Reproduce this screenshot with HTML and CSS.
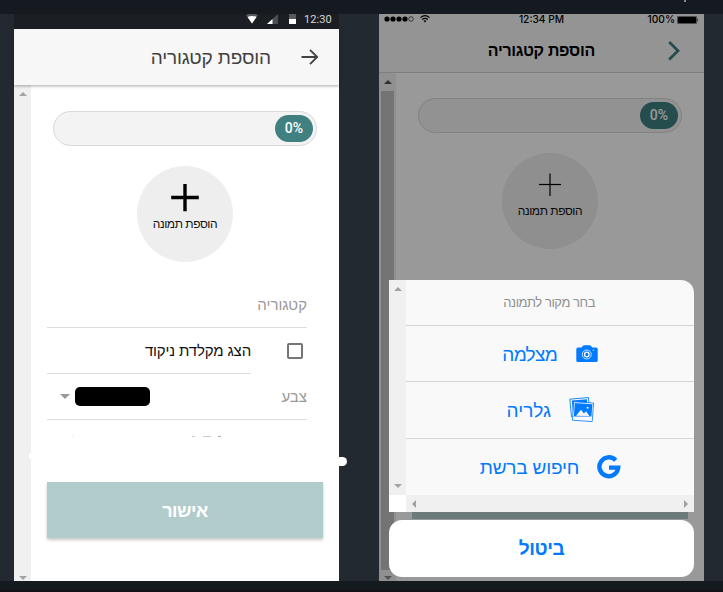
FILE: index.html
```html
<!DOCTYPE html>
<html lang="he">
<head>
<meta charset="utf-8">
<title>הוספת קטגוריה</title>
<link rel="stylesheet" href="styles.css">
</head>
<body>
<div class="topbar"><span class="topbar-mark"></span></div>
<main class="stage">
  <section class="phone android">
    <div class="status">
      <svg class="st-wifi" width="12" height="10" viewBox="0 0 12 10"><path d="M0 1Q6-2 12 1L6 9.5Z" fill="#565a5e"/><path d="M1.5 3Q6 .8 10.5 3L6 9.5Z" fill="#fff"/></svg>
      <svg class="st-signal" width="11" height="10" viewBox="0 0 11 10"><path d="M11 0V10H0Z" fill="#4c4f54"/><path d="M5.5 5V10H0Z" fill="#fff"/></svg>
      <svg class="st-batt" width="7" height="10" viewBox="0 0 7 10"><path d="M0 0H7V10H0Z" fill="#565a5e"/><path d="M0 5H7V10H0Z" fill="#fff"/></svg>
      <span>12:30</span>
    </div>
    <header class="header">
      <h1 dir="rtl">הוספת קטגוריה</h1>
      <svg width="18" height="16" viewBox="0 0 18 16"><path d="M.5 8H16.2M9 .8L16.2 8L9 15.2" fill="none" stroke="#424242" stroke-width="1.8"/></svg>
    </header>
    <div class="view">
      <div class="scroll"><i class="up"></i><i class="down"></i></div>
      <div class="content">
        <div class="progress"><span>0%</span></div>
        <div class="photo">
          <svg width="28" height="28" viewBox="0 0 28 28"><path d="M14 0V27.3M.2 13.5H27.8" stroke="#000" stroke-width="3.4"/></svg>
          <span dir="rtl">הוספת תמונה</span>
        </div>
        <div class="form">
          <div class="row row-cat"><label dir="rtl">קטגוריה</label></div>
          <div class="check-row">
            <div class="row row-check"><label dir="rtl">הצג מקלדת ניקוד</label></div>
            <span class="checkbox"></span>
          </div>
          <div class="row row-color"><i class="caret"></i><span class="swatch"></span><label dir="rtl">צבע</label></div>
        </div>
        <div class="traces"><i class="t0"></i><i class="t1"></i><i class="t2"></i><i class="t3"></i></div>
        <button class="confirm" dir="rtl">אישור</button>
      </div>
    </div>
    <i class="brush-left"></i><i class="brush-right"></i>
  </section>

  <section class="phone ios">
    <div class="status">
      <div class="carrier">
        <svg width="31" height="6" viewBox="0 0 31 6"><g><circle cx="3" cy="3" r="2.6"/><circle cx="9" cy="3" r="2.6"/><circle cx="15" cy="3" r="2.6"/><circle cx="21" cy="3" r="2.6"/><circle cx="27" cy="3" r="2.3" fill="none" stroke="#000" stroke-width=".6"/></g></svg>
        <svg width="10" height="8" viewBox="0 0 10 8"><path d="M.5 2.6Q5-1.2 9.5 2.6M2.2 4.5Q5 2.2 7.8 4.5" fill="none" stroke="#000" stroke-width="1.2"/><path d="M3.5 5.8Q5 4.6 6.5 5.8L5 7.6Z"/></svg>
      </div>
      <span class="clock">12:34 PM</span>
      <div class="power"><span>100%</span>
        <svg width="22" height="8" viewBox="0 0 22 8"><rect x=".3" y=".3" width="19.4" height="7.4" rx="1.2" fill="none" stroke="#000" stroke-width=".6"/><rect x="1" y="1" width="18" height="6" rx=".6"/><path d="M20.5 2.5Q22 4 20.5 5.5Z"/></svg>
      </div>
    </div>
    <header class="header">
      <h1 dir="rtl">הוספת קטגוריה</h1>
      <svg width="12" height="20" viewBox="0 0 12 20"><path d="M1.2 1L10 9.7L1.2 18.5" fill="none" stroke="#408080" stroke-width="2.8"/></svg>
    </header>
    <div class="view">
      <div class="scroll"><i class="up"></i><b class="thumb"></b><i class="down"></i></div>
      <div class="content">
        <div class="progress"><span>0%</span></div>
        <div class="photo">
          <svg width="22" height="24" viewBox="0 0 22 24"><path d="M11 .5V23" stroke="#000" stroke-opacity=".6" stroke-width="2"/><path d="M0 11.5H22" stroke="#000" stroke-width="1.2"/></svg>
          <span dir="rtl">הוספת תמונה</span>
        </div>
        <div class="confirm"></div>
      </div>
    </div>
    <div class="backdrop">
      <div class="sheet">
        <div class="sheet-scroll"><i class="up"></i><i class="down"></i></div>
        <div class="options">
          <div class="option caption"><span dir="rtl">בחר מקור לתמונה</span></div>
          <div class="option camera"><span dir="rtl">מצלמה</span>
            <svg width="22" height="18" viewBox="0 0 22 18"><path d="M2 2.5H5.5L7 .8Q7.4.3 8.2.3H13.6Q14.4.3 14.8.8L16.3 2.5H20Q21.7 2.5 21.7 4.2V15.4Q21.7 17 20 17H2Q.3 17 .3 15.4V4.2Q.3 2.5 2 2.5Z" fill="#007aff"/><circle cx="10.8" cy="9.5" r="4.5" fill="none" stroke="#f9f9f9" stroke-width=".8"/><circle cx="10.8" cy="9.5" r="2.3" fill="none" stroke="#f9f9f9" stroke-width="1.3"/><circle cx="17.3" cy="5.2" r=".6" fill="#f9f9f9"/></svg>
          </div>
          <div class="option gallery"><span dir="rtl">גלריה</span>
            <svg width="26" height="26" viewBox="0 0 26 26"><path d="M.8 2.2L19.4.5L20 6L3.5 20L2.5 19.8Z" fill="#f9f9f9" stroke="#007aff" stroke-width=".9"/><path d="M2.8 3.6L18 2.2V6H6L5 17L4 16.9Z" fill="#007aff"/><path d="M4.8 4.7L24.6 6L23.2 24.6L3.4 23.2Z" fill="#f9f9f9" stroke="#007aff" stroke-width=".8"/><path d="M5.8 6L23.4 7.2L22.4 19.5H4.8Z" fill="#007aff"/><path d="M7 18.7L12 12.8L14.8 16.4L17 14.2L20.4 19Z" fill="#f9f9f9"/><circle cx="18.6" cy="10.7" r="1" fill="#f9f9f9"/></svg>
          </div>
          <div class="option google"><span dir="rtl">חיפוש ברשת</span>
            <svg width="24" height="24" viewBox="0 0 24 24"><path d="M18.7 5.3A9.4 9.4 0 1 0 21.2 12.6H12" fill="none" stroke="#007aff" stroke-width="4.4"/></svg>
          </div>
        </div>
        <div class="corner"></div>
        <div class="sheet-hscroll"><i class="left"></i><i class="right"></i></div>
      </div>
      <button class="cancel" dir="rtl">ביטול</button>
    </div>
  </section>
</main>
<div class="bottombar"></div>
</body>
</html>
```

FILE: styles.css
```css
* { box-sizing: border-box; }
body {
  margin: 0; width: 723px; height: 592px; overflow: hidden;
  display: flex; flex-direction: column;
  background: #232930;
  font-family: "Liberation Sans", Arial, sans-serif;
}
h1, button { margin: 0; font: inherit; border: 0; padding: 0; }
svg { display: block; flex: none; }
i { display: block; flex: none; }
.topbar { height: 14px; background: #151920; display: flex; justify-content: flex-end; padding-right: 37px; flex: none; }
.topbar-mark { width: 2px; height: 2px; background: #85888c; }
.bottombar { height: 11px; background: #151920; border-bottom: 2px solid #111318; }
.stage { height: 567px; display: flex; gap: 40px; padding-left: 14px; flex: none; }
.phone { width: 325px; height: 567px; display: flex; flex-direction: column; position: relative; flex: none; }

/* shared pieces */
.view { display: flex; flex: 1; min-height: 0; }
.scroll { width: 17px; background: #f0f0f0; display: flex; flex-direction: column; justify-content: space-between; align-items: center; flex: none; }
.content { flex: 1; background: #fff; display: flex; flex-direction: column; padding: 0 16px; min-width: 0; }
.up { border: 4px solid transparent; border-top: 0; border-bottom: 4px solid #a3a3a3; }
.down { border: 4px solid transparent; border-bottom: 0; border-top: 4px solid #a3a3a3; }
.progress { height: 35px; margin: 26px 6px 0; flex: none; border: 1px solid #d9d9d9; border-radius: 18px; background: #f3f3f3; display: flex; justify-content: flex-end; align-items: center; padding-right: 3px; }
.progress span { width: 38px; height: 27px; border-radius: 14px; background: #408080; color: #fff; font: 500 14px/27px Roboto, sans-serif; text-align: center; }
.photo { width: 96px; height: 96px; flex: none; border-radius: 50%; background: #eee; margin: 20px auto 0; display: flex; flex-direction: column; align-items: center; padding-top: 18px; }
.photo span { font-size: 12px; letter-spacing: -.45px; line-height: 16px; white-space: nowrap; margin-top: 4px; color: #111; }

/* android */
.android .status { height: 15px; background: #1b1f24; display: flex; align-items: flex-start; padding-left: 232px; flex: none; }
.android .status span { font: 400 11px/12px Roboto, sans-serif; color: #d4d6d8; margin-left: 8px; letter-spacing: .1px; }
.st-signal { margin-left: 9px; }
.st-batt { margin-left: 11px; }
.android .header { height: 56px; background: #f7f7f7; display: flex; justify-content: flex-end; align-items: center; padding-right: 20px; flex: none; box-shadow: 0 1px 3px rgba(0,0,0,.35); z-index: 1; }
.android .header h1 { font-size: 19px; letter-spacing: -.15px; color: #424242; margin-right: 30px; padding-top: 2px; line-height: 28px; }
.android .scroll { padding: 7px 0 1px; }
.form { width: 260px; margin-top: 20px; color: #999; font-size: 15px; line-height: 22px; }
.row { height: 46px; border-bottom: 1px solid #dcdcdc; display: flex; justify-content: flex-end; align-items: center; }
.check-row { display: flex; align-items: center; }
.row-check { width: 204px; color: #111; letter-spacing: -.15px; }
.checkbox { width: 16px; height: 16px; border: 2px solid #757575; border-radius: 2px; margin-left: 36px; }
.row-color { justify-content: flex-start; padding-left: 13px; }
.row-color label { margin-left: auto; }
.caret { border: 5px solid transparent; border-bottom: 0; border-top-color: #999; }
.swatch { width: 75px; height: 19px; border-radius: 5px; background: #000; margin-left: 5px; }
.traces { display: flex; height: 1px; margin-top: 16px; padding-left: 25px; flex: none; }
.traces i { height: 1px; background: #ccc; width: 3px; }
.traces .t0 { width: 2px; background: #eee; }
.traces .t1 { margin-left: 118px; }
.traces .t2 { width: 8px; margin-left: 8px; }
.traces .t3 { margin-left: 7px; background: #aaa; }
.android .confirm { height: 56px; width: 276px; margin-top: 45px; flex: none; background: #b2cccc; color: #fff; font-weight: 700; font-size: 18px; letter-spacing: -.5px; padding-top: 1px; line-height: 56px; text-align: center; box-shadow: 0 2px 3px rgba(0,0,0,.22); }
.brush-left { position: absolute; left: 15px; top: 438px; width: 6px; height: 8px; background: #fff; border-radius: 4px 0 0 4px; }
.brush-right { position: absolute; left: 322px; top: 443px; width: 11px; height: 9px; background: #fff; border-radius: 0 5px 5px 0; }

/* ios */
.ios { background: #fff; color: #000; }
.ios .status { height: 15px; background: #f7f7f7; display: grid; grid-template-columns: 1fr auto 1fr; align-items: start; padding: 0 5px; flex: none; font: 500 10.2px/11px Inter, sans-serif; }
.carrier { display: flex; gap: 5px; align-items: center; padding-top: 1px; }
.power { display: flex; gap: 2px; align-items: center; justify-content: flex-end; }
.ios .header { height: 44px; background: #f7f7f7; border-bottom: 1px solid #d0d0d0; display: flex; justify-content: flex-end; align-items: center; padding-right: 24px; flex: none; }
.ios .header h1 { font-size: 16px; letter-spacing: -.3px; font-weight: 600; line-height: 24px; margin-right: 73px; }
.ios .scroll { padding: 7px 0 1px; }
.ios .scroll .up { border-bottom-color: #505050; }
.ios .scroll .down { border-top-color: #888; }
.thumb { width: 13px; flex: 1; margin: 7px 0 6px; background: #c1c1c1; }
.ios .progress { margin-top: 25px; }
.ios .photo { padding-top: 20px; }
.ios .photo span { margin-top: 6px; }
.ios .confirm { height: 56px; width: 276px; margin-top: 214px; background: #b2cccc; flex: none; }
.backdrop { position: absolute; inset: 0; background: rgba(0,0,0,.4); display: flex; flex-direction: column; justify-content: flex-end; padding: 0 10px 4px; gap: 8px; }
.sheet { height: 232px; display: grid; grid-template-columns: 17px 1fr; grid-template-rows: 215px 17px; border-radius: 0 13px 0 0; overflow: hidden; }
.sheet-scroll { background: #f0f0f0; display: flex; flex-direction: column; justify-content: space-between; align-items: center; padding: 7px 0; }
.corner { background: #fff; }
.sheet-hscroll { background: #f0f0f0; display: flex; justify-content: space-between; align-items: center; padding: 0 6px; }
.left { border: 4px solid transparent; border-left: 0; border-right-color: #a3a3a3; }
.right { border: 4px solid transparent; border-right: 0; border-left-color: #a3a3a3; }
.options { background: #f9f9f9; }
.option { height: 57px; border-bottom: 1px solid #d4d4d4; display: flex; align-items: center; justify-content: flex-end; color: #007aff; font-size: 19px; line-height: 28px; }
.option span { padding-top: 2px; }
.caption { height: 46px; font-size: 13px; letter-spacing: -.45px; color: #8f8f8f; padding-right: 99px; }
.caption span { padding-top: 1px; }
.camera { height: 56px; padding-right: 96px; letter-spacing: -.7px; }
.camera svg { margin-left: 19px; }
.gallery { padding-right: 99px; }
.gallery svg { margin-left: 18px; }
.google { height: 56px; border: 0; padding-right: 73px; letter-spacing: -.2px; }
.google svg { margin-left: 18px; }
.cancel { height: 57px; flex: none; background: #fff; border-radius: 13px; color: #007aff; font-size: 19px; letter-spacing: -.4px; font-weight: 700; line-height: 57px; text-align: center; }
```
